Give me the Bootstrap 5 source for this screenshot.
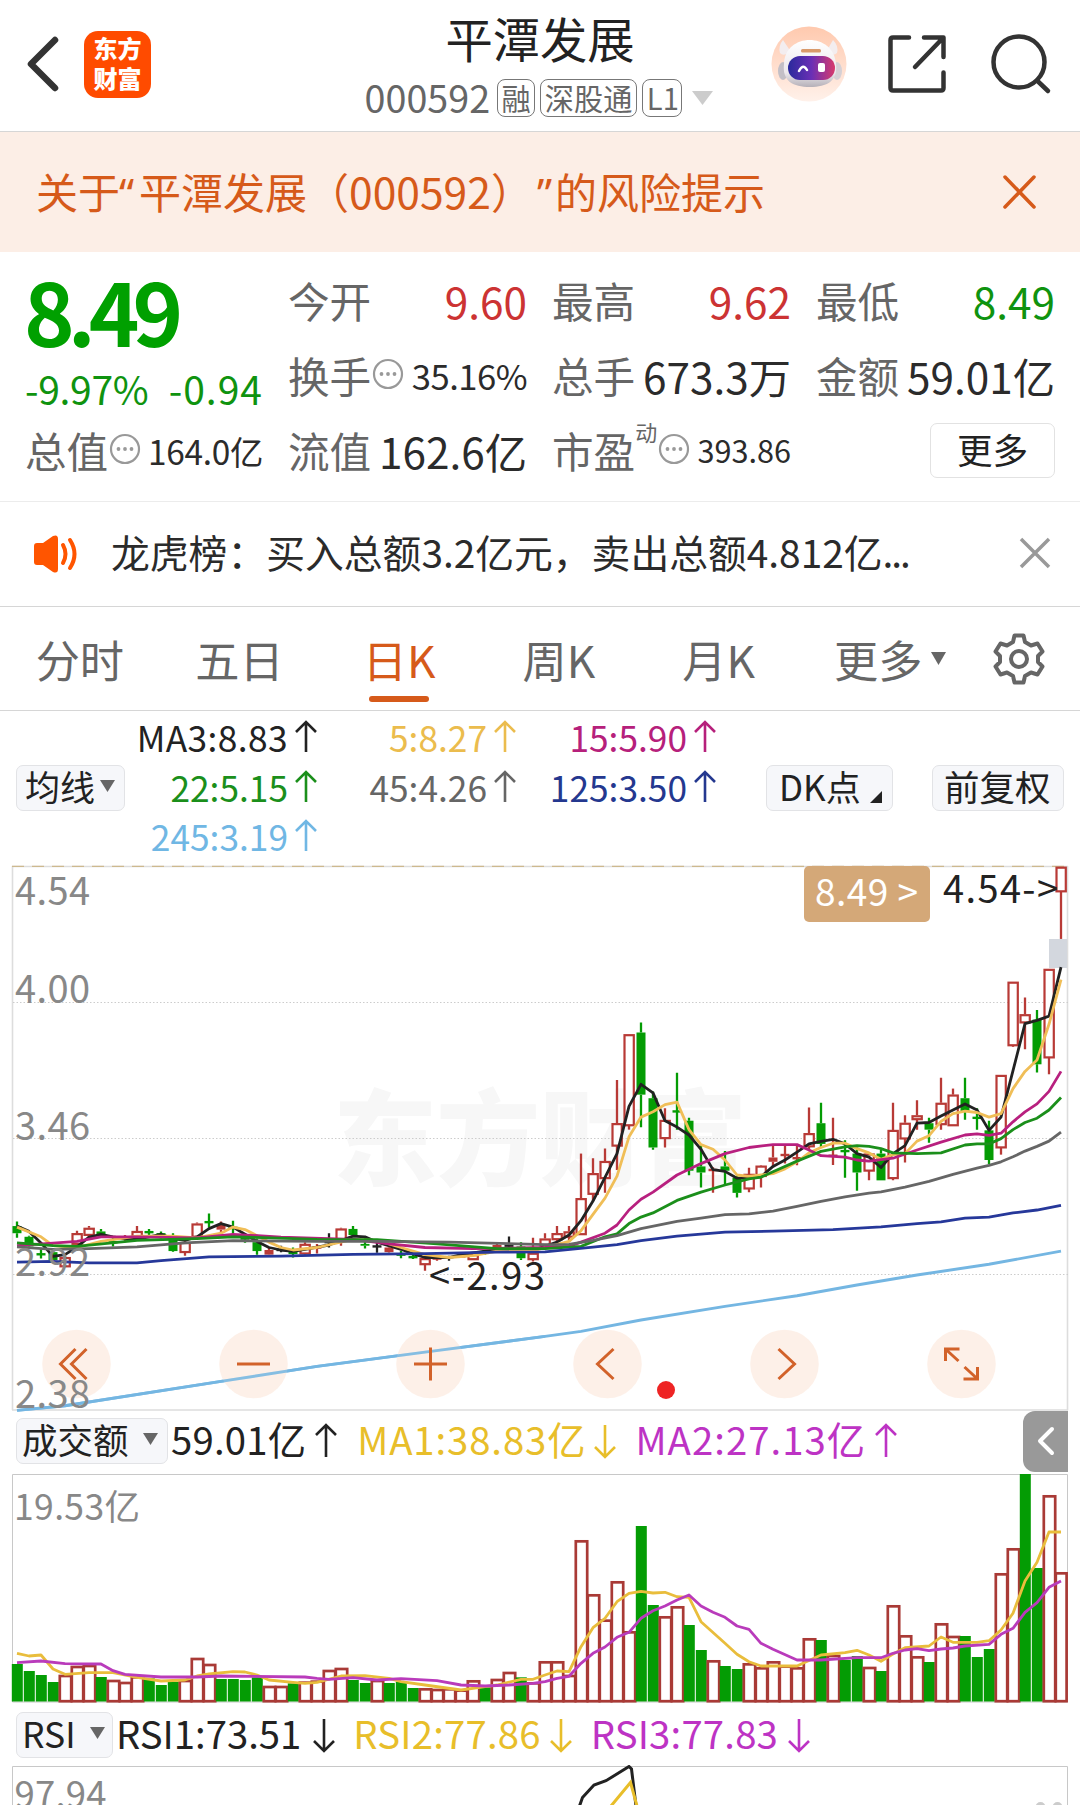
<!DOCTYPE html>
<html lang="zh-CN">
<head>
<meta charset="utf-8">
<meta name="viewport" content="width=device-width, initial-scale=1">
<title>平潭发展 000592</title>
<link href="https://cdn.jsdelivr.net/npm/bootstrap@5.3.0/dist/css/bootstrap.min.css" rel="stylesheet">
<style>
:root{--ink:#222;--sub:#666;--up:#cc3333;--down:#0f930f;--brand:#d65a1a}
html,body{height:1805px;overflow:hidden}
body{width:1080px;margin:0;background:#fff;color:var(--ink);font-family:"Noto Sans CJK SC","Noto Sans",sans-serif;line-height:1}
svg{display:block;overflow:visible}
.topbar{height:132px;border-bottom:1px solid #d6d6d6;padding:0 29px 0 27px}
.topbar .side{width:270px}
.stock-name{font-size:47.3px;line-height:50px;margin-top:13px;padding-left:2px}
.stock-code{font-size:37.7px;line-height:38px;color:var(--sub);margin-top:16px}
.stock-code>span:first-child{margin-top:-3px}
.tag{font-size:29.2px;line-height:34px;height:38px;border:1px solid #777;border-radius:8px;padding:0 3.5px;color:var(--sub)}
.applogo{width:67px;height:67px;border-radius:14px;background:#ff4b00;color:#fff;font-weight:900;font-size:24px;line-height:30px;padding-top:2px;margin-left:26px}
.risk{height:120px;background:#fceee6;color:var(--brand);font-size:42px;padding:0 45px 0 36px}
.risk .num{font-size:42.6px}
.risk .qt{font-family:"Noto Sans",sans-serif;display:inline-block}
.stats{height:250px;border-bottom:1px solid #ececec;padding:11px 24px 0 25px;display:grid;grid-template-columns:238px 239px 239px 239px;column-gap:25px;grid-template-rows:75px 75px 75px}
.cellx{display:flex;align-items:center;justify-content:space-between;font-size:42.3px;white-space:nowrap;line-height:75px}
.cellx .lab{color:var(--sub);display:flex;align-items:center;font-size:41.6px}
.cellx .val{color:#2b2b2b}
.bigprice{grid-row:span 2}
.bigprice .px{font-size:86px;font-weight:700;line-height:100px;color:#00a000;letter-spacing:-7px;margin-left:-1px;margin-top:-3px}
.bigprice .chg{font-size:39px;line-height:50px;color:var(--down);padding-top:3px}
.s33{font-size:33.4px!important;letter-spacing:-.3px}.s35{font-size:34.6px!important;letter-spacing:-.5px}.s31{font-size:30.6px!important}
.upr{color:var(--up)!important}.dnr{color:var(--down)!important}
.more-btn{width:125px;height:55px;border:1.5px solid #e2e2e2;border-radius:7px;font-size:35.6px;line-height:47px;padding:0 0 4px;text-align:center;color:var(--ink);background:#fff}
.news{height:105px;border-bottom:1px solid #d6d6d6;padding:0 30px 0 33px;font-size:38.8px;color:#2b2b2b}
.tabs{height:104px;border-bottom:1px solid #d6d6d6;color:var(--sub);font-size:44.2px;padding:0 35px 0 0}
.tabs a{color:inherit;text-decoration:none;line-height:104px;height:103px;width:159.7px;text-align:center;position:relative;white-space:nowrap}
.tabs a.on{color:var(--brand)}
.tabs a.on::after{content:"";position:absolute;left:50%;margin-left:-30px;width:60px;height:6px;border-radius:3px;bottom:8px;background:var(--brand)}
.ma{height:153px;padding:0 0 0 16px;font-size:35.3px}
.ma .grid3{display:grid;grid-template-columns:192px 199px 200px;grid-template-rows:49.5px 49.5px 49.5px;line-height:49.5px;margin-top:-2px}
.ma .grid3>div{display:flex;justify-content:flex-end;align-items:center;gap:7px;white-space:nowrap}
.chip{background:#f6f7fa;border:1.5px solid #e2e3e6;border-radius:7px;height:46px;line-height:38px;padding:0 9px 4px;color:var(--ink);white-space:nowrap;display:flex;align-items:center}
.ind{height:60px;padding:0 12px 0 16px;font-size:38.3px;white-space:nowrap}
.ind>span{margin-top:-3px}
.ind .arr{margin-top:-1px}
.ind .chip{font-size:35.5px}
.side-tab{width:45px;height:61px;border-radius:12px 0 0 12px;background:#999}
svg text{font-family:"Noto Sans CJK SC","Noto Sans",sans-serif}
</style>
</head>
<body>
<header class="topbar d-flex align-items-start justify-content-between">
  <div class="side d-flex align-items-center" style="height:129px">
    <svg width="31" height="56" fill="none" stroke="#333" stroke-width="6.5" stroke-linecap="round" stroke-linejoin="round"><path d="M28 3L4 27L28 51"/></svg>
    <div class="applogo text-center">东方<br>财富</div>
  </div>
  <div class="d-flex flex-column align-items-center">
    <div class="stock-name">平潭发展</div>
    <div class="stock-code d-flex align-items-center"><span>000592</span><span class="tag" style="margin-left:7px">融</span><span class="tag" style="margin-left:5px">深股通</span><span class="tag" style="margin-left:5px;padding:0 2.500px 0 4px">L1</span>
      <svg width="21" height="14" style="margin-left:10px"><path d="M0 0H21L10.500 14Z" fill="#ccc"/></svg></div>
  </div>
  <div class="side d-flex align-items-center justify-content-end" style="height:128px">
    <svg width="76" height="76" viewBox="0 0 76 76">
      <defs><linearGradient id="halo" x1="0" y1="0" x2="0" y2="1"><stop offset="0" stop-color="#ffc9ae"/><stop offset="1" stop-color="#fff1ea"/></linearGradient>
      <linearGradient id="visor"><stop offset="0" stop-color="#2a2a9c"/><stop offset=".5" stop-color="#6a2fb5"/><stop offset="1" stop-color="#d83a6c"/></linearGradient>
      <linearGradient id="shell" x1="0" y1="0" x2="0" y2="1"><stop offset="0" stop-color="#fff"/><stop offset=".7" stop-color="#ece8ec"/><stop offset="1" stop-color="#b5b0b8"/></linearGradient></defs>
      <circle cx="38" cy="38" r="37.500" fill="url(#halo)"/>
      <path d="M12 14Q7 20 9 27Q12 31 20 26ZM62 14Q68 20 66 27Q62 31 55 26Z" fill="#f3edef"/>
      <ellipse cx="12" cy="45" rx="5" ry="9" fill="#c3bfc6"/><ellipse cx="66" cy="45" rx="5" ry="9" fill="#d5d0d5"/>
      <path d="M13 38C14 6 63 6 65 38C67 55 56 61 39 61S11 55 13 38Z" fill="url(#shell)"/>
      <rect x="30" y="23" width="20" height="3.500" rx="1.500" fill="#d99a6b"/>
      <rect x="17" y="30" width="47" height="24" rx="12" fill="url(#visor)"/>
      <path d="M28 45Q32 37 36 44" fill="none" stroke="#fff" stroke-width="2.500" stroke-linecap="round"/><rect x="47" y="37" width="7" height="9" rx="2" fill="#fff"/>
    </svg>
    <svg width="58" height="58" viewBox="0 0 58 58" style="margin-left:41px" fill="none" stroke="#333" stroke-width="4.500" stroke-linecap="round" stroke-linejoin="round"><path d="M21 2.500H5Q2.500 2.500 2.500 5V53Q2.500 55.500 5 55.500H53Q55.500 55.500 55.500 53V37.500M36 2.500H55.500V22M54 4L27 32"/></svg>
    <svg width="60" height="60" viewBox="0 0 60 60" style="margin-left:45px" fill="none" stroke="#333" stroke-width="4.500" stroke-linecap="round"><circle cx="28" cy="28" r="25.500"/><path d="M46 46.500L57 57"/></svg>
  </div>
</header>

<div class="risk d-flex align-items-center justify-content-between">
  <div class="text-nowrap">关于<span class="qt" style="width:19px;text-indent:-1px">“</span>平潭发展（<span class="num">000592</span>）<span class="qt" style="width:22px;text-indent:4px">”</span>的风险提示</div>
  <svg width="31" height="31" stroke="#d65a1a" stroke-width="3.500" stroke-linecap="round"><path d="M1 0L30 30M30 0L1 30"/></svg>
</div>

<section class="stats">
  <div class="bigprice"><div class="px">8.49</div><div class="chg d-flex justify-content-between"><span style="letter-spacing:-.3px">-9.97%</span><span style="letter-spacing:1px">-0.94</span></div></div>
  <div class="cellx"><span class="lab">今开</span><span class="val upr">9.60</span></div>
  <div class="cellx"><span class="lab">最高</span><span class="val upr">9.62</span></div>
  <div class="cellx"><span class="lab">最低</span><span class="val dnr">8.49</span></div>
  <div class="cellx"><span class="lab">换手<svg class="dots" width="32" height="32"></svg></span><span class="val s35">35.16%</span></div>
  <div class="cellx"><span class="lab">总手</span><span class="val">673.3万</span></div>
  <div class="cellx"><span class="lab">金额</span><span class="val">59.01亿</span></div>
  <div class="cellx"><span class="lab">总值<svg class="dots" width="32" height="32"></svg></span><span class="val s33">164.0亿</span></div>
  <div class="cellx"><span class="lab">流值</span><span class="val">162.6亿</span></div>
  <div class="cellx"><span class="lab">市盈<small style="font-size:22px;line-height:22px;margin:0 0 40px 0">动</small><svg class="dots" width="32" height="32"></svg></span><span class="val s31">393.86</span></div>
  <div class="cellx justify-content-end"><button class="more-btn btn">更多</button></div>
</section>

<div class="news d-flex align-items-center">
  <svg width="46" height="38" viewBox="0 0 46 38"><path d="M1 11Q1 8 4 8H10L20 1Q25 -1 25 4V34Q25 39 20 37L10 30H4Q1 30 1 27Z" fill="#ff5500"/><path d="M30 10Q35 19 30 28M37 5Q46 19 37 33" fill="none" stroke="#ff5500" stroke-width="4" stroke-linecap="round"/></svg>
  <div class="flex-grow-1 text-nowrap" style="margin:-5px 0 0 32px">龙虎榜：买入总额3.2亿元，卖出总额4.812亿<span style="letter-spacing:-2px">...</span></div>
  <svg width="30" height="30" stroke="#999" stroke-width="3.500"><path d="M1 0L29 28M29 0L1 28"/></svg>
</div>

<nav class="tabs d-flex align-items-center">
  <a href="#">分时</a><a href="#">五日</a><a href="#" class="on">日K</a><a href="#">周K</a><a href="#">月K</a>
  <a href="#" class="d-flex align-items-center justify-content-center">更多<svg width="15" height="13" style="margin:0 -24px 0 9px"><path d="M0 0H15L7.500 13Z" fill="#666"/></svg></a>
  <svg class="ms-auto" width="52" height="52" viewBox="0 0 52 52" fill="none" stroke="#666" stroke-width="4" stroke-linejoin="round"><path d="M21.500 2.500H30.500L32 9L38 12.500L44.500 10.500L49.500 18.500L45 23V29L49.500 33.500L44.500 41.500L38 39.500L32 43L30.500 49.500H21.500L20 43L14 39.500L7.500 41.500L2.500 33.500L7 29V23L2.500 18.500L7.500 10.500L14 12.500L20 9Z"/><circle cx="26" cy="26" r="8"/></svg>
</nav>

<section class="ma d-flex align-items-center">
  <div class="chip" style="font-size:35px;width:109px;padding-left:8px">均线<svg width="15" height="12" style="margin-left:5px"><path d="M0 0H15L7.500 12Z" fill="#666"/></svg></div>
  <div class="grid3">
    <div><span style="letter-spacing:.4px">MA3:8.83</span><svg class="arr" width="22" height="32"></svg></div>
    <div style="color:#ebbc4d">5:8.27<svg class="arr" width="22" height="32"></svg></div>
    <div style="color:#b6207b">15:5.90<svg class="arr" width="22" height="32"></svg></div>
    <div style="color:#1b8f1b">22:5.15<svg class="arr" width="22" height="32"></svg></div>
    <div style="color:#666">45:4.26<svg class="arr" width="22" height="32"></svg></div>
    <div style="color:#24388f">125:3.50<svg class="arr" width="22" height="32"></svg></div>
    <div style="color:#70b7e4">245:3.19<svg class="arr" width="22" height="32"></svg></div>
  </div>
  <div class="chip" style="font-size:35px;width:127px;margin-left:50px;padding-left:12px">DK点<svg width="12" height="12" style="margin:22px 0 0 9px"><path d="M12 0V12H0Z" fill="#222"/></svg></div>
  <div class="chip" style="font-size:35.500px;width:132px;margin-left:39px;padding-left:11px">前复权</div>
</section>

<svg id="kline" width="1080" height="547" viewBox="0 864 1080 547"></svg>

<div class="ind d-flex align-items-center">
  <div class="chip" style="width:152px;padding-left:5px">成交额<svg width="15" height="12" style="margin-left:14px"><path d="M0 0H15L7.500 12Z" fill="#666"/></svg></div>
  <span style="margin-left:3px;letter-spacing:.2px">59.01亿</span><svg class="arr" width="22" height="34" style="margin-left:9px"></svg>
  <span style="margin-left:20px;letter-spacing:.9px;color:#e8be2a">MA1:38.83亿</span><svg class="arr down" width="22" height="34" style="margin-left:8px;color:#e8be2a"></svg>
  <span style="margin-left:19px;letter-spacing:1.050px;color:#bd33c4">MA2:27.13亿</span><svg class="arr" width="22" height="34" style="margin-left:9px;color:#bd33c4"></svg>
  <div class="side-tab ms-auto d-flex align-items-center justify-content-center"><svg width="16" height="26" fill="none" stroke="#fff" stroke-width="4" stroke-linecap="round" stroke-linejoin="round"><path d="M14 1L2 13L14 25"/></svg></div>
</div>
<svg id="volume" width="1080" height="234" viewBox="0 1471 1080 234"></svg>
<div class="ind d-flex align-items-center">
  <div class="chip" style="width:97px;padding-left:5px">RSI<svg width="15" height="12" style="margin-left:14px"><path d="M0 0H15L7.500 12Z" fill="#666"/></svg></div>
  <span style="margin-left:3px">RSI1:73.51</span><svg class="arr down" width="22" height="34" style="margin-left:12px"></svg>
  <span style="margin-left:18px;letter-spacing:.2px;color:#e8be2a">RSI2:77.86</span><svg class="arr down" width="22" height="34" style="margin-left:9px;color:#e8be2a"></svg>
  <span style="margin-left:19px;letter-spacing:.2px;color:#bd33c4">RSI3:77.83</span><svg class="arr down" width="22" height="34" style="margin-left:10px;color:#bd33c4"></svg>
</div>
<svg width="1080" height="40" viewBox="0 1765 1080 40" style="overflow:hidden">
  <path d="M12.500 1806V1766.500H1067.500V1806" fill="none" stroke="#c8c8c8"/>
  <text x="14.500" y="1808" font-size="36.500" fill="#888" textLength="92">97.94</text>
  <path d="M579.500 1806L582.500 1797.500L594 1785L606 1780.700L629 1766.500L631.500 1769L636 1806" fill="none" stroke="#222" stroke-width="3"/>
  <path d="M611 1806L630.500 1782.500L637 1806" fill="none" stroke="#e8be2a" stroke-width="3"/>
  <circle cx="1040.500" cy="1807" r="5" fill="#ccc"/><circle cx="1057.500" cy="1807" r="5" fill="#ccc"/>
</svg>

<script src="https://cdn.jsdelivr.net/npm/bootstrap@5.3.0/dist/js/bootstrap.bundle.min.js"></script>
<script>
document.querySelectorAll('.dots').forEach(s=>{s.style.margin='-4px 0 0 1px';s.innerHTML='<circle cx="16" cy="16" r="14" fill="none" stroke="#999" stroke-width="2.2"/><g fill="#999"><circle cx="9.500" cy="16" r="1.900"/><circle cx="16" cy="16" r="1.900"/><circle cx="22.500" cy="16" r="1.900"/></g>'});
document.querySelectorAll('.arr').forEach(s=>{const h=+s.getAttribute('height');const dn=s.classList.contains('down');
  s.innerHTML=`<path d="M11 1V${h-1}M1 11L11 1L21 11" fill="none" stroke="currentColor" stroke-width="2.6" ${dn?`transform="rotate(180 11 ${h/2})"`:''}/>`});

const X=i=>17+12*i;
const KY=v=>860+v/2.8, VY=v=>1400+v/3;
const line=(s,f,c,w)=>`<polyline fill="none" stroke="${c}" stroke-width="${w}" stroke-linejoin="round" points="${s.split(' ').map(p=>{const[a,b]=p.split(':');return X(+a)+','+f(+b).toFixed(1)}).join(' ')}"/>`;

/* candle: colour, high, body top, body bottom, low (R = solid red, k = unchanged) */
const candles=`g 1012 1025 1045 1058|g 1052 1055 1082 1086|g 1090 1104 1104 1116|g 1095 1098 1120 1128|r 1108 1112 1138 1138|r 1038 1045 1075 1095|r 1025 1030 1050 1060|g 1033 1040 1050 1055|g 1055 1070 1070 1082|r 1050 1060 1060 1070|r 1025 1039 1055 1058|g 1033 1042 1042 1052|g 1040 1048 1048 1060|g 1045 1055 1095 1097|r 1060 1070 1098 1108|r 1015 1018 1055 1060|g 990 1014 1014 1030|R 1012 1020 1035 1042|g 1010 1030 1030 1045|g 1045 1060 1060 1072|g 1060 1070 1095 1105|R 1085 1092 1105 1110|k 1080 1092 1092 1098|g 1085 1100 1100 1113|r 1070 1075 1102 1105|r 1075 1085 1085 1102|k 1045 1070 1070 1085|r 1030 1032 1065 1080|g 1025 1033 1050 1055|g 1055 1075 1080 1088|k 1070 1082 1082 1100|R 1080 1085 1098 1100|g 1095 1105 1105 1115|g 1100 1112 1112 1117|r 1110 1115 1132 1150|r 1108 1116 1116 1122|k 1108 1112 1112 1122|r 1108 1110 1110 1113|r 1100 1104 1118 1118|g 1095 1100 1100 1105|R 1073 1078 1086 1090|k 1054 1080 1080 1090|g 1070 1082 1115 1120|r 1058 1100 1118 1124|r 1045 1060 1078 1090|r 1025 1045 1062 1072|r 1025 1040 1055 1065|r 822 947 1048 1048|r 835 877 935 955|r 808 843 891 932|r 616 737 800 868|r 488 488 743 755|g 455 483 657 748|g 648 667 805 811|r 695 728 779 805|g 596 704 704 755|g 722 730 870 883|g 795 858 875 917|r 860 868 868 932|g 815 858 870 912|g 885 890 932 945|r 862 879 920 930|r 855 856 885 917|R 800 833 845 860|r 795 826 826 850|r 800 835 835 855|r 693 765 802 810|g 680 737 795 805|r 722 828 828 854|g 785 815 815 890|g 805 822 875 926|r 818 822 870 897|g 812 822 897 897|r 680 756 891 897|r 715 736 780 847|r 673 715 726 755|g 722 737 755 792|r 610 680 740 755|r 640 657 743 743|g 610 667 705 727|g 695 722 722 755|g 730 757 840 852|r 602 602 805 825|r 341 341 519 523|r 385 432 455 530|g 420 447 572 595|r 305 305 553 600|r 19 19 88 221`.split('|').map(s=>s.split(' '));
let k='<path d="M12 866.500H1068M12.500 866V1410M1067.500 866V1410M12 1410H1068" stroke="#ddd" stroke-width="1.600"/><path d="M12 866.300H1068" stroke="#cdb98f" stroke-width="1.200" stroke-dasharray="12 8"/>';
k+='<text x="333" y="1178" font-size="104" font-weight="900" fill="#f7f7f7" textLength="414">东方财富</text>';
k+='<path d="M13 1002.500H1068M13 1138.500H1068M13 1274.500H1068" stroke="#ccc" stroke-dasharray="1.500 2"/>';
candles.forEach(([t,h,a,b,l],i)=>{
  h=KY(+h);a=KY(+a);b=KY(+b);l=KY(+l);const x=X(i),c=t=='g'?'#049c04':t=='k'?'#222':'#b83a36';
  k+=`<path d="M${x} ${h}V${a}M${x} ${b}V${l}" stroke="${c}" stroke-width="2.300"/>`;
  if(b-a<1) k+=`<path d="M${x-4.5} ${a}H${x+4.5}" stroke="${c}" stroke-width="2.400"/>`;
  else if(t=='r') k+=`<rect x="${x-4.5}" y="${a+.9}" width="9.300" height="${Math.max(b-a-1,2)}" fill="#fff" stroke="${c}" stroke-width="2.200"/>`;
  else k+=`<rect x="${x-4.5}" y="${a}" width="9" height="${b-a}" fill="${c}"/>`;
});
k+='<rect x="1049" y="939" width="18" height="29" fill="#d3d7de"/>';
k+=line('0:1025 1:1040 2:1072 3:1110 4:1105 5:1083 6:1056 7:1048 8:1055 9:1060 10:1062 12:1048 13:1060 14:1065 15:1055 16:1032 17:1018 18:1028 19:1048 20:1068 21:1085 22:1092 23:1096 24:1090 26:1078 28:1053 29:1055 30:1070 32:1090 33:1103 34:1113 36:1113 37:1105 40:1090 42:1090 43:1092 44:1082 45:1070 46:1050 47:1010 48:955 50:822 51:690 52:628 53:652 54:730 55:748 56:770 57:810 58:867 59:872 60:891 61:890 62:887 63:858 64:840 65:818 66:795 67:788 68:782 69:795 70:822 71:832 72:861 73:822 74:800 75:737 76:735 77:717 78:700 79:683 80:700 81:757 82:720 83:590 84:458 85:449 86:437 87:300',KY,'#222',2.8);
k+=line('0:1028 2:1055 3:1080 5:1085 7:1068 10:1053 13:1053 15:1058 17:1045 18:1028 19:1035 20:1052 21:1070 22:1085 23:1092 25:1085 28:1062 30:1065 32:1085 34:1105 36:1113 38:1108 40:1095 43:1095 44:1085 46:1068 47:1038 48:992 49:947 50:885 51:775 52:720 53:705 54:685 55:678 56:755 57:797 58:810 59:840 60:882 61:886 62:882 63:878 64:865 65:845 66:820 67:805 68:793 69:793 70:808 71:820 72:838 73:825 74:822 75:787 76:772 77:732 78:710 79:703 80:707 81:720 82:710 83:640 84:592 85:560 86:460 87:335',KY,'#f0be57',2.8);
k+=line('0:1080 3:1073 5:1068 7:1055 10:1055 15:1058 18:1048 22:1056 28:1062 31:1075 34:1085 38:1088 44:1085 46:1082 47:1070 49:1045 50:1022 51:980 52:950 53:930 55:882 57:850 59:822 61:805 63:797 65:797 66:812 67:828 69:832 70:840 71:843 73:835 75:812 77:790 79:770 80:767 81:771 82:765 83:733 84:705 85:683 86:648 87:592',KY,'#b8207f',2.8);
k+=line('0:1072 3:1080 5:1082 10:1065 15:1060 18:1055 25:1062 30:1063 35:1075 40:1088 44:1088 47:1082 49:1055 50:1047 51:1018 52:1000 53:988 55:953 57:930 59:910 61:893 62:888 63:873 65:843 67:816 69:803 70:800 71:802 72:808 73:820 75:822 77:820 79:798 80:795 81:795 82:780 83:755 84:735 85:723 86:700 87:665',KY,'#1b8f1b',2.8);
k+=line('0:1083 3:1090 6:1088 10:1083 14:1072 18:1066 25:1068 30:1068 36:1070 44:1077 46:1076 48:1065 50:1052 52:1032 55:1012 57:1003 59:993 61:991 63:983 65:970 67:956 69:943 71:933 72:929 74:916 76:900 78:880 80:863 81:855 82:845 83:831 84:815 85:802 86:787 87:762',KY,'#666',2.8);
k+=line('0:1126 3:1124 6:1128 10:1128 12:1122 16:1111 22:1109 28:1104 34:1102 40:1098 44:1097 48:1084 50:1077 52:1066 55:1053 59:1042 63:1039 68:1035 72:1027 75:1018 77:1013 79:1003 81:1000 83:988 85:980 87:967',KY,'#26389a',2.8);
k+=line('0:1541 4:1528 17:1460 25:1418 34:1378 44:1334 47:1320 52:1288 59:1250 65:1220 70:1190 75:1162 81:1132 87:1095',KY,'#74b6e2',2.9);
[['4.54',905],['4.00',1003],['3.46',1140],['2.92',1276]].forEach(([s,y])=>k+=`<text x="15" y="${y}" font-size="38" fill="#888" textLength="75">${s}</text>`);
k+='<text x="429" y="1290" font-size="38" fill="#222" textLength="116">&lt;-2.93</text>';
k+='<rect x="804" y="866" width="126" height="56" rx="5" fill="#d4a878"/><text x="815" y="906" font-size="37" fill="#fff" textLength="103">8.49 &gt;</text>';
k+='<text x="943" y="903" font-size="38" fill="#222" textLength="115">4.54-&gt;</text>';
const ctl=['M-1 -15L-16 0L-1 15M10 -15L-5 0L10 15','M-16.500 0H16.500','M-16.500 0H16.500M0 -16.500V16.500','M6 -15L-10 0L6 15','M-6 -15L10 0L-6 15','M-16 -3V-15H-2M-15 -14L-3 -3M16 3V15H2M15 14L3 3'];
ctl.forEach((d,i)=>k+=`<g transform="translate(${76.5+177*i} 1364)"><circle r="34.300" fill="#fdeee5" fill-opacity=".88"/></g>`);
k+=line('0:1541 4:1528 17:1460 25:1418 34:1378 44:1334',KY,'#74b6e2',2.9).replace('<polyline','<polyline opacity=".85"');
ctl.forEach((d,i)=>k+=`<g transform="translate(${76.5+177*i} 1364)"><path d="${d}" fill="none" stroke="#d2622a" stroke-width="3"/></g>`);
k+='<text x="15" y="1408" font-size="38" fill="#888" textLength="75">2.38</text>';
k+='<circle cx="666" cy="1390" r="9" fill="#ee2424"/>';
document.getElementById('kline').innerHTML=k;

const vols='g792 g813 g825 g846 r828 r801 r798 g831 r843 r849 r832 g835 g855 g845 r843 r777 r795 g837 g837 g840 g832 r861 r861 g850 r848 r845 r813 r807 g840 g849 r843 g849 g845 g864 r868 r870 r868 r872 r844 g862 r840 r819 g832 r850 r787 r787 r828 r424 r586 r662 r547 r697 g378 g615 r652 r622 g675 g750 r784 g798 g807 r793 r805 r787 r800 r805 r718 g720 r768 g780 g768 r804 g813 r619 r709 r772 g786 r673 r711 g708 g771 g747 r523 r448 g222 g504 r289 r520'.split(' ');
let v='<path d="M12.500 1702V1474.500H1067.500V1702Z" fill="none" stroke="#c8c8c8"/>';
vols.forEach((s,i)=>{const x=X(i),y=VY(+s.slice(1));
  v+=s[0]=='g'?`<rect x="${x-5.2}" y="${y}" width="11" height="${1701.5-y}" fill="#049c04"/>`
   :`<rect x="${x-5.2}" y="${y}" width="${i==87?10.8:11.4}" height="${1701.2-y}" fill="#fff" stroke="#a93a36" stroke-width="2.700"/>`});
v+=line('0:760 1:768 2:765 3:807 4:823 6:818 8:818 10:832 12:843 14:840 15:828 16:822 18:815 19:816 20:825 21:840 23:847 24:850 25:847 27:828 29:827 31:835 32:845 34:855 37:870 39:860 40:855 42:838 43:838 44:825 45:813 46:815 47:740 48:683 49:655 50:605 51:580 52:574 53:579 54:577 55:590 56:592 57:665 59:730 60:763 61:785 62:798 65:798 67:765 69:758 70:751 71:765 72:784 73:762 74:743 76:738 77:711 78:727 80:727 81:722 82:690 83:640 84:543 85:487 86:396 87:396',VY,'#e9bd3c',2.8);
v+=line('0:788 2:783 4:791 7:792 8:812 9:823 12:831 15:831 17:828 24:831 25:835 26:838 28:833 30:840 32:836 35:842 37:855 39:858 41:855 43:850 44:845 45:835 46:829 47:790 48:760 49:741 50:712 51:697 52:655 53:632 54:618 55:600 56:585 57:618 58:637 59:652 60:678 61:688 62:730 63:748 65:780 67:780 70:773 72:773 73:760 74:750 75:746 76:752 77:747 78:744 79:738 81:733 82:703 83:685 84:637 85:608 86:562 87:543',VY,'#b93bbb',2.8);
v+='<text x="14" y="1520" font-size="35.500" fill="#888" textLength="126">19.53亿</text>';
document.getElementById('volume').innerHTML=v;
</script>
</body>
</html>
